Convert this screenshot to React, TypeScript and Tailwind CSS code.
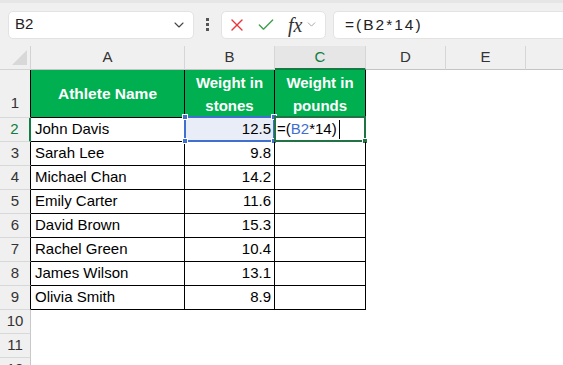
import React from 'react';
import { ChevronDown, X, Check } from 'lucide-react';

const athletes = [
  { name: 'John Davis', stones: '12.5' },
  { name: 'Sarah Lee', stones: '9.8' },
  { name: 'Michael Chan', stones: '14.2' },
  { name: 'Emily Carter', stones: '11.6' },
  { name: 'David Brown', stones: '15.3' },
  { name: 'Rachel Green', stones: '10.4' },
  { name: 'James Wilson', stones: '13.1' },
  { name: 'Olivia Smith', stones: '8.9' },
];

const font = "font-['Liberation_Sans',Arial,sans-serif]";

// Small square handle used on selection corners
const Handle = ({ className }: { className: string }) => (
  <span className={`absolute h-[6px] w-[6px] border border-white ${className}`} />
);

const Toolbar = () => (
  <div className="h-[46px] bg-[#f0f0f0] border-t-[3px] border-[#e6e6e6] flex items-center pl-2 gap-0">
    {/* Name box */}
    <div className="w-[186px] h-[28px] bg-white rounded-[5px] border border-[#e3e3e3] flex items-center justify-between pl-[6px] pr-[6px]">
      <span className="text-[15px] text-[#222]">B2</span>
      <ChevronDown className="h-[16px] w-[16px] text-[#444]" strokeWidth={1.6} />
    </div>
    {/* Divider dots */}
    <div className="w-[27px] flex flex-col items-center gap-[2px]">
      <span className="h-[3px] w-[3px] bg-[#555]" />
      <span className="h-[3px] w-[3px] bg-[#555]" />
      <span className="h-[3px] w-[3px] bg-[#555]" />
    </div>
    {/* Cancel / enter / fx */}
    <div className="w-[105px] h-[28px] bg-white rounded-[5px] border border-[#e3e3e3] flex items-center pl-[5px]">
      <X className="h-[20px] w-[20px] text-[#e5393f]" strokeWidth={1.6} />
      <Check className="ml-[9px] h-[20px] w-[20px] text-[#3aa04a]" strokeWidth={1.6} />
      <span className="ml-[12px] font-['Liberation_Serif',serif] italic text-[20px] leading-none text-[#333]">fx</span>
      <ChevronDown className="ml-[3px] h-[13px] w-[13px] text-[#999]" strokeWidth={1.6} />
    </div>
    {/* Formula input */}
    <div className="ml-[7px] flex-1 h-[28px] bg-white rounded-l-[5px] border border-r-0 border-[#e3e3e3] flex items-center pl-[11px]">
      <span className="text-[15.5px] tracking-[2px] text-[#222]">=(B2*14)</span>
    </div>
  </div>
);

const widths = ['w-[31px]', 'w-[154px]', 'w-[90px]', 'w-[91px]', 'w-[80px]', 'w-[80px]'];

const ColumnHeaders = () => {
  const letters = ['A', 'B', 'C', 'D', 'E'];
  return (
    <div className="flex h-[24px] bg-[#f0f0f0]">
      <div className="w-[31px] shrink-0 relative border-r border-b border-[#d3d3d3]">
        <div className="absolute left-[12px] top-[4px] w-0 h-0 border-l-[15px] border-l-transparent border-b-[15px] border-b-[#d8d8d8]" />
      </div>
      {letters.map((l, i) => (
        <div
          key={l}
          className={`${widths[i + 1]} shrink-0 flex items-center justify-center text-[15px] border-r border-[#d6d6d6] ${
            l === 'C'
              ? 'bg-[#e6e6e6] text-[#107c41] border-b-2 border-b-[#107c41]'
              : 'text-[#333] border-b border-b-[#c4c4c4]'
          }`}
        >
          {l}
        </div>
      ))}
      <div className="flex-1 border-b border-[#c4c4c4]" />
    </div>
  );
};

const RowHeader = ({ n, tall, table }: { n: number; tall?: boolean; table: boolean }) => {
  const selected = n === 2;
  return (
    <div
      className={`w-[31px] shrink-0 flex justify-center text-[15px] bg-[#f0f0f0] border-b border-b-[#d8d8d8] border-r ${
        tall ? 'items-end pb-[3px]' : 'items-center'
      } ${
        selected
          ? 'bg-[#e4e4e4] text-[#107c41] border-r-2 border-r-[#107c41]'
          : table
          ? 'text-[#333] border-r-black'
          : 'text-[#333] border-r-[#c8c8c8]'
      }`}
    >
      {n}
    </div>
  );
};

const Sheet = () => (
  <div className="flex flex-col">
    <ColumnHeaders />

    {/* Row 1: table header */}
    <div className="flex h-[48px]">
      <RowHeader n={1} tall table />
      <div className="w-[154px] shrink-0 bg-[#00b050] border-r border-b border-black flex items-center justify-center text-white font-bold text-[15.5px]">
        Athlete Name
      </div>
      <div className="w-[90px] shrink-0 bg-[#00b050] border-r border-b border-black flex flex-col items-center justify-center text-white font-bold text-[15px] leading-[23px]">
        <span>Weight in</span>
        <span>stones</span>
      </div>
      <div className="w-[91px] shrink-0 bg-[#00b050] border-r border-b border-black flex flex-col items-center justify-center text-white font-bold text-[15px] leading-[23px]">
        <span>Weight in</span>
        <span>pounds</span>
      </div>
    </div>

    {/* Data rows */}
    {athletes.map((a, i) => (
      <div key={a.name} className="flex h-[24px]">
        <RowHeader n={i + 2} table />
        <div className="w-[154px] shrink-0 border-r border-b border-black flex items-center pl-[4px] text-[15px] text-black">
          {a.name}
        </div>
        <div
          className={`w-[90px] shrink-0 relative border-r border-b border-black flex items-center justify-end pr-[3px] text-[15px] text-black ${
            i === 0 ? 'bg-[#e8edf8]' : ''
          }`}
        >
          {a.stones}
          {i === 0 && (
            <div className="absolute -left-[1px] -top-[2px] -right-[1px] -bottom-[1px] border-2 border-[#3f6fcf]">
              <Handle className="-left-[4px] -top-[4px] bg-[#3f6fcf]" />
              <Handle className="-right-[4px] -top-[4px] bg-[#3f6fcf]" />
              <Handle className="-left-[4px] -bottom-[4px] bg-[#3f6fcf]" />
              <Handle className="-right-[4px] -bottom-[4px] bg-[#3f6fcf]" />
            </div>
          )}
        </div>
        <div className="w-[91px] shrink-0 relative border-r border-b border-black flex items-center pl-[2px] text-[15px] text-black">
          {i === 0 && (
            <>
              <span>
                =(<span className="text-[#3f6fcf]">B2</span>*14)
              </span>
              <span className="ml-[2px] h-[19px] w-px bg-black" />
              <div className="absolute -left-[1px] -top-[2px] -right-[1px] -bottom-[1px] border-2 border-[#217346]">
                <span className="absolute -right-[4px] -bottom-[4px] h-[6px] w-[6px] bg-[#217346] border border-white" />
              </div>
            </>
          )}
        </div>
      </div>
    ))}

    {/* Empty rows */}
    {[10, 11, 12].map((n) => (
      <div key={n} className="flex h-[24px]">
        <RowHeader n={n} table={false} />
        <div className="flex-1" />
      </div>
    ))}
  </div>
);

export default function App() {
  return (
    <div className={`w-[563px] h-[365px] overflow-hidden bg-white ${font}`}>
      <Toolbar />
      <Sheet />
    </div>
  );
}
